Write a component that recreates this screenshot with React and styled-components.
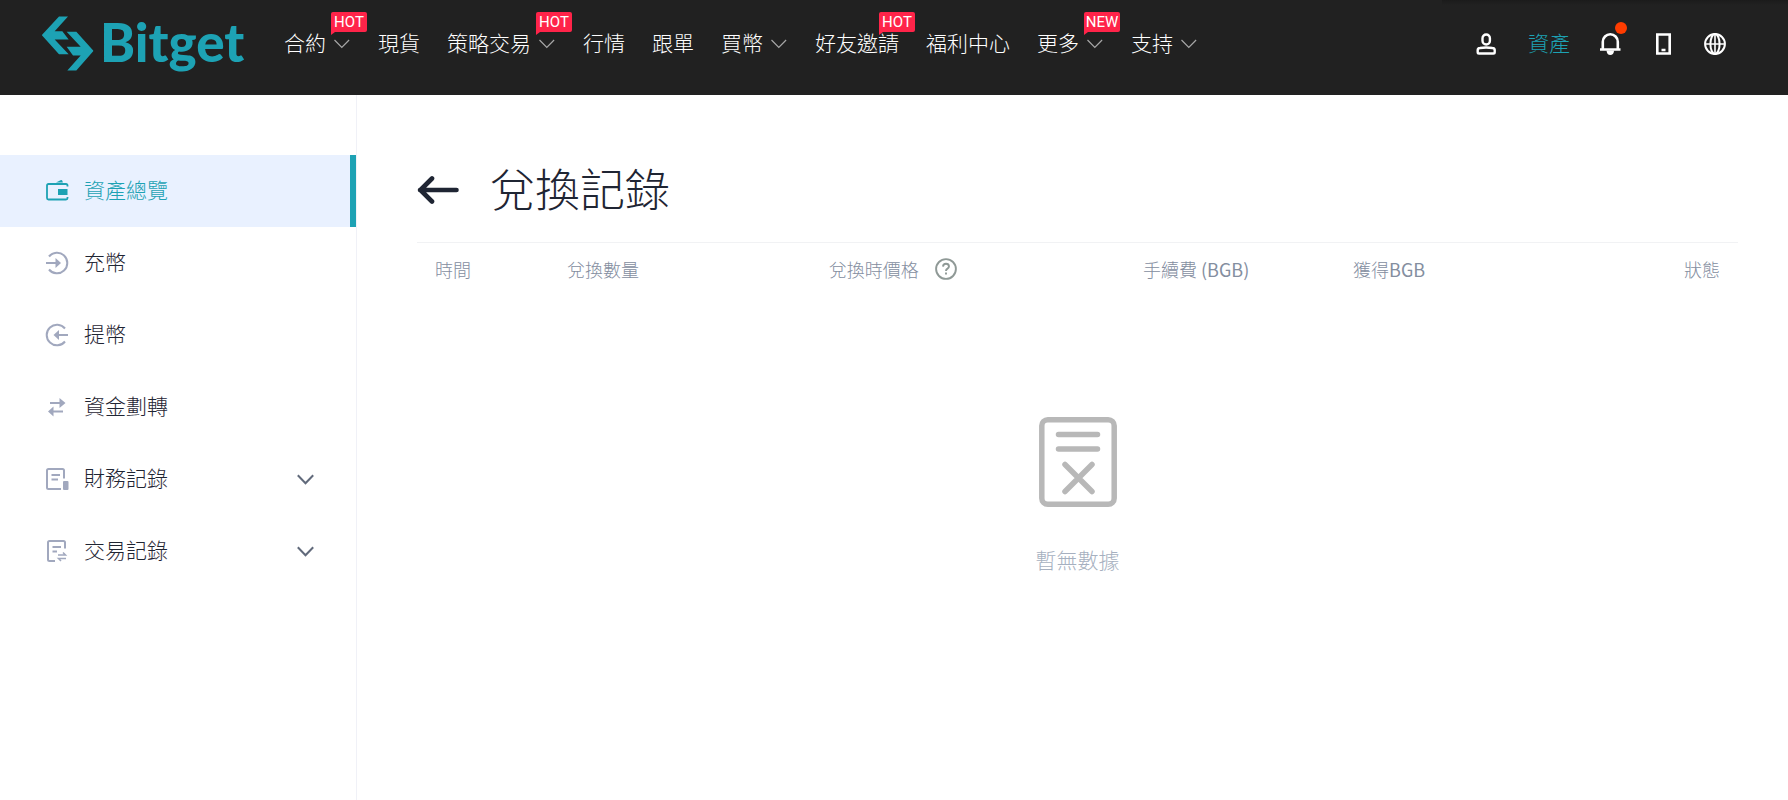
import React, { useState } from "react";
import styled, { createGlobalStyle } from "styled-components";

const GlobalStyle = createGlobalStyle`
	* {
		box-sizing: border-box;
	}
	body {
		margin: 0;
		background: #fff;
		color: #1f2533;
		font-family: "Noto Sans CJK TC", "Noto Sans", sans-serif;
		font-weight: 300;
	}
	a {
		color: inherit;
		text-decoration: none;
	}
	button {
		padding: 0;
		border: 0;
		background: none;
		color: inherit;
		font: inherit;
		cursor: pointer;
	}
	svg {
		display: block;
		flex: none;
	}
`;

const Page = styled.div`
	min-height: 100vh;
	display: flex;
	flex-direction: column;
`;

const Header = styled.header`
	height: 95px;
	padding: 0 62px 8px 42px;
	display: flex;
	align-items: center;
	background: linear-gradient(#1b1b1b, #212121) right top / 346px 5px no-repeat #212121;
	color: #fff;
`;

const Logo = styled.a`
	width: 242px;
	flex: none;
	display: flex;
	align-items: center;
	gap: 6px;
	color: #1da2b4;
`;

const LogoText = styled.span`
	padding-bottom: 4px;
	font-family: Lato, sans-serif;
	font-size: 53px;
	font-weight: 900;
	line-height: 56px;
`;

const Nav = styled.nav`
	flex: 1;
	display: flex;
	gap: 27px;
	font-size: 21px;
	line-height: 20px;
	white-space: nowrap;
`;

const NavItem = styled.a`
	position: relative;
	display: flex;
	align-items: center;
	gap: 8px;
`;

const NavLabel = styled.span`
	padding-bottom: 4px;
`;

const Badge = styled.span`
	position: absolute;
	top: -20px;
	right: -16px;
	width: 36px;
	height: 20px;
	border-radius: 2px 2px 2px 0;
	background: #ff2449;
	font-family: Roboto, sans-serif;
	font-size: 15px;
	font-weight: 400;
	line-height: 20px;
	text-align: center;

	&::after {
		content: "";
		position: absolute;
		left: 0;
		top: 100%;
		border-top: 3px solid #ff2449;
		border-right: 4px solid transparent;
	}
`;

const Tools = styled.div`
	display: flex;
	align-items: center;
	gap: 30px;
	font-size: 21px;
	line-height: 32px;
`;

const AssetsLink = styled.a`
	padding-bottom: 4px;
	color: #1da2b4;
`;

const ToolButton = styled.button`
	position: relative;
`;

const Dot = styled.span`
	position: absolute;
	top: -11px;
	right: -5px;
	width: 12px;
	height: 12px;
	border-radius: 50%;
	background: #ff3c00;
`;

const Body = styled.div`
	flex: 1;
	display: flex;
`;

const Sidebar = styled.aside`
	width: 357px;
	flex: none;
	padding-top: 60px;
	border-right: 1px solid #f0f1f7;
`;

const SideItem = styled.a`
	width: 100%;
	height: 72px;
	padding: 0 42px 0 45px;
	display: flex;
	align-items: center;
	gap: 15px;
	font-size: 21px;
	line-height: 32px;
	text-align: left;
	color: ${(p) => (p.$active ? "#1da2b4" : "#1f2533")};
	background: ${(p) => (p.$active ? "#e9f1ff" : "none")};
	box-shadow: ${(p) => (p.$active ? "inset -6px 0 #1da2b4" : "none")};
`;

const SideIcon = styled.span`
	color: ${(p) => (p.$active ? "#1da2b4" : "#a1a8be")};
`;

const SideLabel = styled.span`
	flex: 1;
	padding-bottom: 4px;
`;

const Main = styled.main`
	flex: 1;
	min-width: 0;
	padding: 60px 50px 0 60px;
`;

const TitleBar = styled.div`
	height: 88px;
	display: flex;
	align-items: center;
	gap: 31px;
	padding-bottom: 18px;
	border-bottom: 1px solid #f1f2f4;
`;

const Title = styled.h1`
	margin: 0;
	padding-bottom: 4px;
	font-size: 45px;
	font-weight: 300;
	line-height: 64px;
`;

const Table = styled.table`
	width: 100%;
	table-layout: fixed;
	border-collapse: collapse;
`;

const Th = styled.th`
	width: ${(p) => p.$width || "auto"};
	height: 56px;
	padding: 0 18px 4px;
	color: #848e9f;
	font-size: 18px;
	font-weight: 300;
	line-height: 24px;
	text-align: ${(p) => (p.$right ? "right" : "left")};
	white-space: nowrap;
`;

const Unit = styled.span`
	font-weight: 400;
`;

const HeadCell = styled.span`
	display: flex;
	align-items: center;
	gap: 16px;
`;

const Empty = styled.td`
	padding: 118px 0 40px;
	color: #a6b0c0;
	font-size: 21px;
	line-height: 32px;
	text-align: center;

	svg {
		margin: 0 auto 36px;
	}
`;

const stroke = { fill: "none", stroke: "currentColor" };

const LogoMark = () => (
	<svg width="52" height="55" viewBox="18 20 156 164" fill="currentColor">
		<path d="M69 21H96L56 65H79L98 90H56L98 134H69L19 79q-2-2 0-4z" />
		<path d="M121 183H94L134 138H111L92 112H134L92 67H121L171 122q2 2 0 4z" />
	</svg>
);

const NavChevron = () => (
	<svg width="17" height="10" viewBox="0 0 17 10" {...stroke} strokeWidth="1.2" opacity=".6">
		<path d="M.5 1l7.300 7.500L15.100 1" />
	</svg>
);

const SideChevron = () => (
	<svg width="17" height="11" viewBox="0 0 17 11" {...stroke} stroke="#616a7b" strokeWidth="2">
		<path d="M.8 1.2l7.7 8 7.7-8" />
	</svg>
);

const UserIcon = () => (
	<svg width="22" height="22" viewBox="0 0 22 22" {...stroke} strokeWidth="2.4">
		<rect x="6.5" y="1.5" width="7.4" height="10" rx="3.7" />
		<path d="M4 15q6-1 12.400 0q2.300.3 2.300 2v2.200q0 1.300-1.300 1.300H3q-1.300 0-1.300-1.300v-2.200q0-1.700 2.300-2z" />
	</svg>
);

const BellIcon = () => (
	<svg width="22" height="22" viewBox="0 0 22 22" {...stroke} strokeWidth="2.6">
		<path d="M2.800 17V8.800a7.300 7.300 0 0 1 15 0V17M0 16.500h20.500" />
		<path d="M6.500 17.500q.5 4.500 3.800 4.500t3.800-4.500z" fill="currentColor" stroke="none" />
	</svg>
);

const PhoneIcon = () => (
	<svg width="22" height="22" viewBox="0 0 22 22" {...stroke} strokeWidth="2.600">
		<path d="M5.300 1.500h12.400v19H5.300zM9.500 17h4" />
	</svg>
);

const GlobeIcon = () => (
	<svg width="22" height="22" viewBox="0 0 22 22" {...stroke} strokeWidth="2">
		<circle cx="11" cy="11" r="9.900" />
		<ellipse cx="11" cy="11" rx="4.600" ry="9.900" />
		<path d="M1 11h20M11 1v20" strokeWidth="1.600" />
	</svg>
);

const WalletIcon = () => (
	<svg width="24" height="24" viewBox="0 0 24 24" {...stroke} strokeWidth="1.800">
		<path d="M22.500 7.500V6.500q0-1.500-1.500-1.500H3.500Q2 5 2 6.500v12.500q0 1.500 1.500 1.500H21q1.500 0 1.500-1.500v-1" />
		<path d="M13 10h9.500v6H13zM11 3.500l4.500-2.300q1.500-.5 2 1l.4 1.300z" fill="currentColor" stroke="none" />
	</svg>
);

const DepositIcon = () => (
	<svg width="24" height="24" viewBox="0 0 24 24" {...stroke} strokeWidth="2">
		<path d="M4 5.500a10.300 10.300 0 1 1 0 13M1 12h11" />
		<path d="M10.500 7l5.500 5-5.500 5z" fill="currentColor" stroke="none" />
	</svg>
);

const WithdrawIcon = () => (
	<svg width="24" height="24" viewBox="0 0 24 24" {...stroke} strokeWidth="2">
		<path d="M20 5.500a10.300 10.300 0 1 0 0 13M23 12H12" />
		<path d="M14 7l-5.500 5 5.500 5z" fill="currentColor" stroke="none" />
	</svg>
);

const TransferIcon = () => (
	<svg width="24" height="24" viewBox="0 0 24 24" {...stroke} strokeWidth="1.800">
		<path d="M5 8h11M7 16.500h11" />
		<path d="M14.500 3l6 5-6 5zM8.500 11.500L3 16.500l5.500 5z" fill="currentColor" stroke="none" />
	</svg>
);

const FinanceIcon = () => (
	<svg width="24" height="24" viewBox="0 0 24 24" {...stroke} strokeWidth="2">
		<path d="M19 11.500V3.500q0-1.500-1.500-1.500h-14Q2 2 2 3.500v17Q2 22 3.500 22H16M6.500 8H15M6.500 12.500H13" />
		<rect x="18" y="14" width="5.500" height="9" rx="1" fill="currentColor" stroke="none" />
	</svg>
);

const TradeIcon = () => (
	<svg width="24" height="24" viewBox="0 0 24 24" {...stroke} strokeWidth="2">
		<path d="M20 9.500V3.500Q20 2 18.500 2h-14Q3 2 3 3.500v17Q3 22 4.500 22H10M7.500 8H16M7.500 12.500H12" />
		<path d="M13 16h7.500l-2.500-2.500M21 19.500h-7.500l2.500 2.500" strokeWidth="1.500" />
	</svg>
);

const BackIcon = () => (
	<svg width="42" height="28" viewBox="0 0 42 28" {...stroke} strokeWidth="4.600" strokeLinecap="round" strokeLinejoin="round">
		<path d="M39.500 14H3M15 2.500L3.500 14L15 25.500" />
	</svg>
);

const HelpIcon = () => (
	<svg width="22" height="22" viewBox="0 0 22 22" {...stroke} stroke="#8f9996" strokeWidth="1.900">
		<circle cx="11" cy="11" r="9.900" />
		<path d="M8 8.600q.2-2.800 3-2.800t3 2.500q0 1.400-1.500 2.300-1.500.8-1.500 2.300M11 14.500v2" />
	</svg>
);

const EmptyIcon = () => (
	<svg width="78" height="90" viewBox="0 0 78 90" {...stroke} stroke="#b8b8b8" strokeWidth="5.500" strokeLinecap="round">
		<rect x="2.800" y="2.800" width="72.400" height="84.400" rx="6" />
		<path d="M19.500 17.500h39M19.500 32h39M26 47.500L53 74.500M53 47.500L26 74.500" />
	</svg>
);

const navItems = [
	{ label: "合約", menu: true, badge: "HOT" },
	{ label: "現貨" },
	{ label: "策略交易", menu: true, badge: "HOT" },
	{ label: "行情" },
	{ label: "跟單" },
	{ label: "買幣", menu: true },
	{ label: "好友邀請", badge: "HOT" },
	{ label: "福利中心" },
	{ label: "更多", menu: true, badge: "NEW" },
	{ label: "支持", menu: true },
];

const sideItems = [
	{ label: "資產總覽", Icon: WalletIcon, active: true },
	{ label: "充幣", Icon: DepositIcon },
	{ label: "提幣", Icon: WithdrawIcon },
	{ label: "資金劃轉", Icon: TransferIcon },
	{ label: "財務記錄", Icon: FinanceIcon, group: true },
	{ label: "交易記錄", Icon: TradeIcon, group: true },
];

function TopBar() {
	return (
		<Header>
			<Logo href="#home">
				<LogoMark />
				<LogoText>Bitget</LogoText>
			</Logo>
			<Nav>
				{navItems.map(({ label, menu, badge }) => (
					<NavItem key={label} href={`#${label}`}>
						<NavLabel>{label}</NavLabel>
						{menu && <NavChevron />}
						{badge && <Badge>{badge}</Badge>}
					</NavItem>
				))}
			</Nav>
			<Tools>
				<ToolButton type="button" aria-label="帳戶">
					<UserIcon />
				</ToolButton>
				<AssetsLink href="#assets">資產</AssetsLink>
				<ToolButton type="button" aria-label="通知">
					<BellIcon />
					<Dot />
				</ToolButton>
				<ToolButton type="button" aria-label="下載">
					<PhoneIcon />
				</ToolButton>
				<ToolButton type="button" aria-label="語言">
					<GlobeIcon />
				</ToolButton>
			</Tools>
		</Header>
	);
}

function SideMenu() {
	const [open, setOpen] = useState("");
	return (
		<Sidebar>
			{sideItems.map(({ label, Icon, active, group }) => (
				<SideItem
					key={label}
					$active={active}
					{...(group
						? {
								as: "button",
								type: "button",
								"aria-expanded": open === label,
								onClick: () => setOpen(open === label ? "" : label),
							}
						: { href: `#${label}` })}
				>
					<SideIcon $active={active}>
						<Icon />
					</SideIcon>
					<SideLabel>{label}</SideLabel>
					{group && <SideChevron />}
				</SideItem>
			))}
		</Sidebar>
	);
}

export default function App() {
	return (
		<Page>
			<GlobalStyle />
			<TopBar />
			<Body>
				<SideMenu />
				<Main>
					<TitleBar>
						<button type="button" aria-label="返回">
							<BackIcon />
						</button>
						<Title>兌換記錄</Title>
					</TitleBar>
					<Table>
						<thead>
							<tr>
								<Th $width="10%">時間</Th>
								<Th $width="19.8%">兌換數量</Th>
								<Th $width="23.8%">
									<HeadCell>
										兌換時價格
										<HelpIcon />
									</HeadCell>
								</Th>
								<Th $width="15.9%">
									手續費 <Unit>(BGB)</Unit>
								</Th>
								<Th>
									獲得<Unit>BGB</Unit>
								</Th>
								<Th $right>狀態</Th>
							</tr>
						</thead>
						<tbody>
							<tr>
								<Empty colSpan={6}>
									<EmptyIcon />
									暫無數據
								</Empty>
							</tr>
						</tbody>
					</Table>
				</Main>
			</Body>
		</Page>
	);
}
